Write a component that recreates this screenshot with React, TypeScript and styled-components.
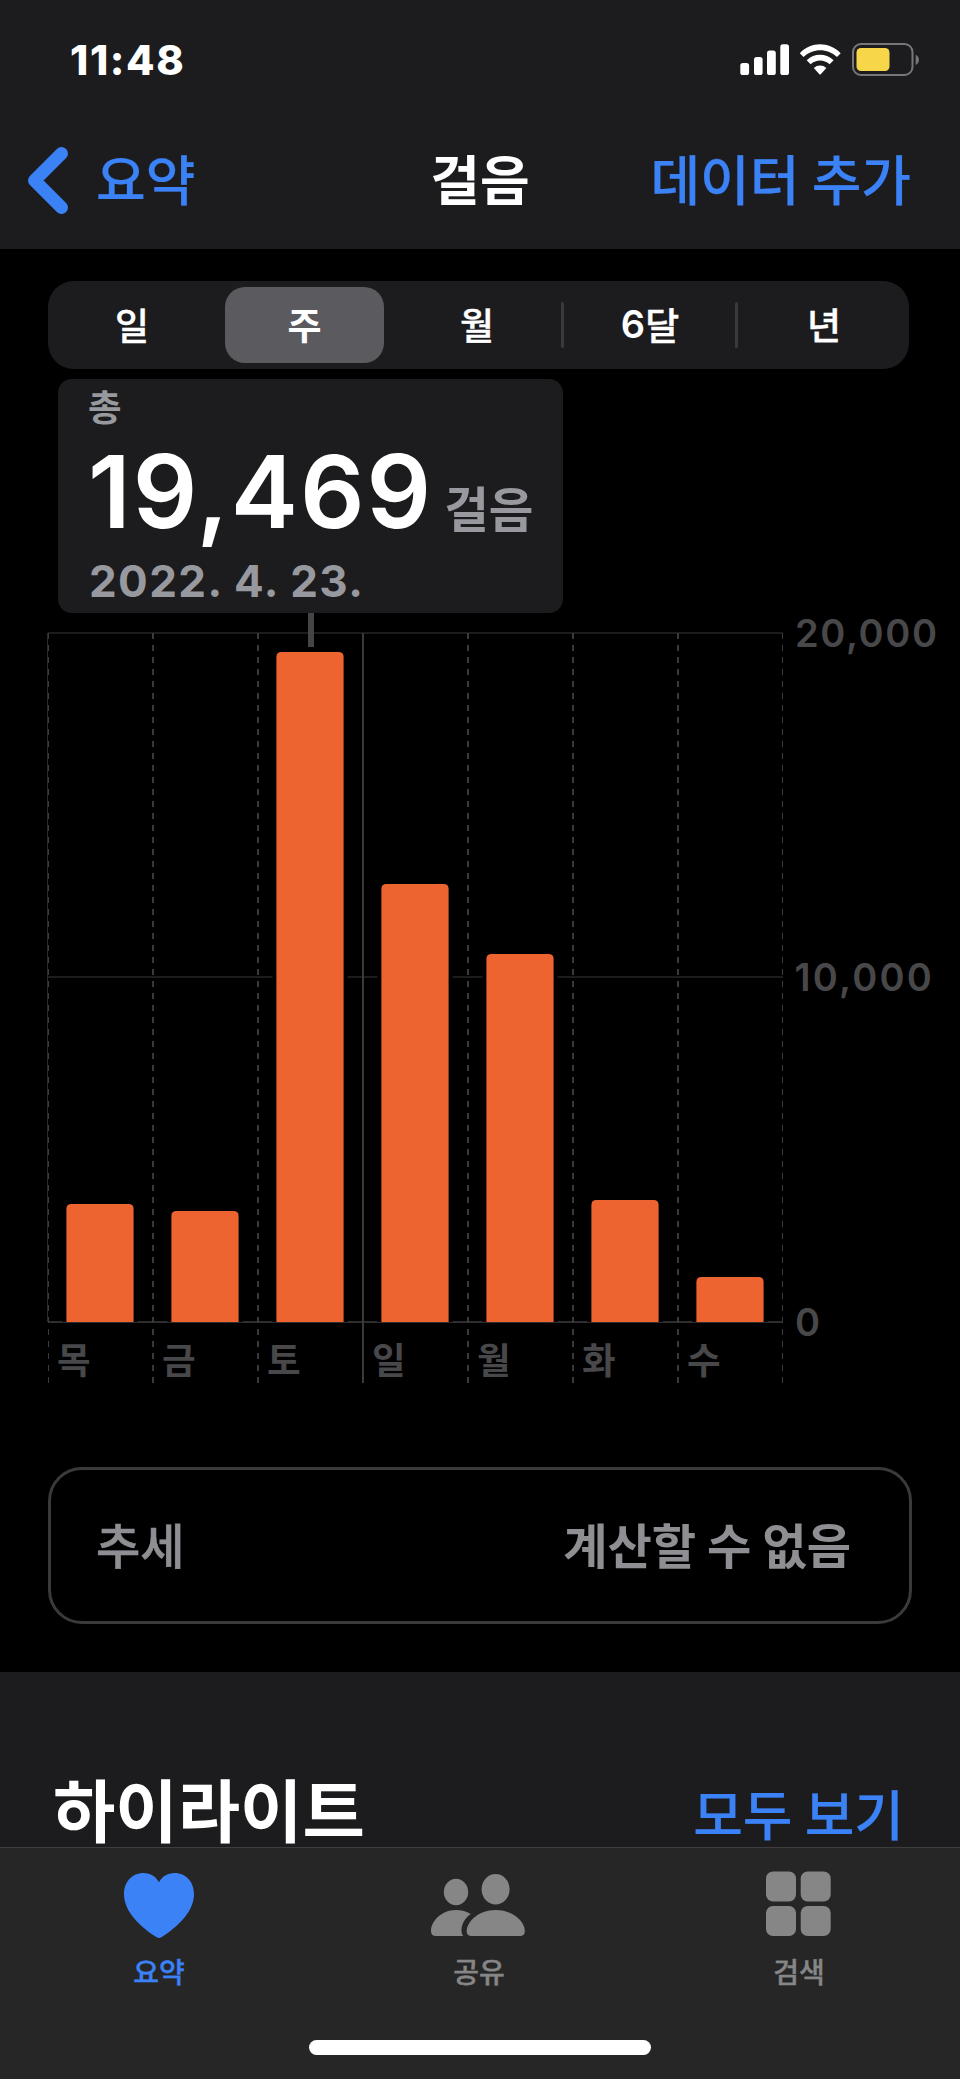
import React from "react";
import styled, { createGlobalStyle } from "styled-components";

const LATIN = `Inter, "Noto Sans CJK KR", sans-serif`;
const KOREAN = `"Noto Sans CJK KR", Inter, sans-serif`;

const color = {
  blue: "#3b82f7",
  orange: "#ed6430",
  panel: "#1c1c1e",
  tabBar: "#262626",
  line: "#3a3a3c",
  faint: "#1c1c1e",
  label: "#98989f",
  gray: "#8e8e93",
  axis: "#48484a",
  tab: "#868686",
};

const GlobalStyle = createGlobalStyle`
  *, *::before, *::after { box-sizing: border-box; }
  body { margin: 0; background: #000; }
  button { border: 0; padding: 0; margin: 0; background: none; font: inherit; color: inherit; }
`;

const Screen = styled.div`
  width: 960px;
  height: 2079px;
  display: flex;
  flex-direction: column;
  overflow: hidden;
  background: #000;
  color: #fff;
  font-family: ${KOREAN};
  white-space: nowrap;
`;

const Header = styled.header`
  height: 249px;
  flex: none;
  background: ${color.panel};
`;

const StatusBar = styled.div`
  height: 120px;
  padding: 0 41px 0 70px;
  display: flex;
  align-items: center;
  justify-content: space-between;
`;

const Clock = styled.span`
  font: 800 41.5px/60px ${LATIN};
  letter-spacing: 1.6px;
`;

const NavBar = styled.nav`
  height: 114px;
  padding: 1px 28px 0;
  display: grid;
  grid-template-columns: 1fr auto 1fr;
  align-items: center;
  font-size: 54px;
  line-height: 80px;
`;

const BackButton = styled.button`
  display: flex;
  align-items: center;
  gap: 28px;
  color: ${color.blue};
  font-weight: 500;
  -webkit-text-stroke: 0.2px currentColor;
`;

const BackChevron = styled.svg`
  margin-top: 6px;
`;

const NavTitle = styled.h1`
  margin: 0;
  font-size: inherit;
  font-weight: 700;
`;

const TextButton = styled.button`
  justify-self: end;
  text-align: right;
  color: ${color.blue};
  font-weight: 500;
  -webkit-text-stroke: 0.2px currentColor;
`;

const AddButton = styled(TextButton)`
  margin-right: 21px;
`;

const Segments = styled.div`
  flex: none;
  width: 861px;
  height: 88px;
  margin: 32px 0 0 48px;
  border-radius: 26px;
  background: ${color.panel};
  display: grid;
  grid-template-columns: 170px 173px 172px 174px 172px;
`;

const Segment = styled.button<{ $active?: boolean; $divided?: boolean }>`
  position: relative;
  display: flex;
  align-items: center;
  justify-content: center;
  margin: ${(p) => (p.$active ? "6px 7px" : "6px 0")};
  padding-bottom: 3px;
  border-radius: 20px;
  background: ${(p) => (p.$active ? "#5b5a5f" : "transparent")};
  font: ${(p) => (p.$active ? 700 : 500)} 37px/50px ${KOREAN};
  -webkit-text-stroke: ${(p) => (p.$active ? "0" : "0.4px")} currentColor;

  &:first-child {
    padding-right: 2px;
  }

  &:last-child {
    padding-left: 2px;
  }

  &::after {
    content: "";
    display: ${(p) => (p.$divided ? "block" : "none")};
    position: absolute;
    right: -1px;
    top: 15px;
    width: 3px;
    height: 46px;
    border-radius: 2px;
    background: ${color.line};
  }
`;

const Six = styled.span`
  font-family: Inter, sans-serif;
  font-weight: 600;
  font-size: 38px;
  -webkit-text-stroke: 0;
`;

const Callout = styled.section`
  flex: none;
  width: 505px;
  height: 234px;
  margin: 10px 0 0 58px;
  padding: 5px 0 0 30px;
  border-radius: 14px;
  background: ${color.panel};
  color: ${color.label};
`;

const CalloutCaption = styled.div`
  font-size: 36.5px;
  font-weight: 700;
  line-height: 44px;
`;

const CalloutValue = styled.div`
  display: flex;
  align-items: baseline;
  height: 125px;
  font-size: 48.5px;
  font-weight: 700;
  line-height: 100px;
`;

const BigNumber = styled.span`
  color: #fff;
  margin-right: 11px;
  font: 600 101px/127px ${LATIN};
  letter-spacing: 2px;
`;

const CalloutDate = styled.div`
  padding-left: 1px;
  font: 700 44px/56px ${LATIN};
  letter-spacing: 1.4px;
`;

const Chart = styled.svg`
  flex: none;
  display: block;
  overflow: visible;
`;

const AxisNumber = styled.text<{ $spacing?: number }>`
  font: 600 38px ${LATIN};
  letter-spacing: ${(p) => p.$spacing ?? 0}px;
  fill: ${color.axis};
`;

const DayLabel = styled.text`
  font: 700 36.5px ${KOREAN};
  fill: ${color.axis};
`;

const TrendCard = styled.section`
  flex: none;
  width: 864px;
  height: 157px;
  margin: 74px 0 0 48px;
  padding: 0 58px 6px 45px;
  border: 3px solid ${color.line};
  border-radius: 34px;
  display: flex;
  align-items: center;
  justify-content: space-between;
  color: ${color.gray};
  font-size: 48.2px;
  line-height: 70px;
`;

const TrendName = styled.span`
  font-weight: 500;
  -webkit-text-stroke: 0.6px currentColor;
`;

const TrendValue = styled.span`
  font-weight: 700;
`;

const Highlights = styled.section`
  flex: none;
  height: 175px;
  margin-top: 48px;
  padding: 86px 56px 0 53px;
  background: ${color.panel};
  display: flex;
  justify-content: space-between;
  align-items: flex-start;
`;

const HighlightsTitle = styled.h2`
  margin: 0;
  font-size: 67.8px;
  font-weight: 700;
  line-height: 100px;
`;

const ShowAll = styled(TextButton)`
  padding-top: 15px;
  font-size: 54px;
  line-height: 80px;
`;

const TabBar = styled.footer`
  flex: none;
  height: 232px;
  background: ${color.tabBar};
  border-top: 1px solid #3d3d3d;
  display: flex;
  flex-direction: column;
  align-items: center;
`;

const Tabs = styled.div`
  width: 960px;
  height: 192px;
  display: grid;
  grid-template-columns: repeat(3, 320px);
`;

const Tab = styled.button<{ $active?: boolean }>`
  display: flex;
  flex-direction: column;
  align-items: center;
  padding: 22px 2px 0 0;
  color: ${(p) => (p.$active ? color.blue : color.tab)};
  font: 500 28px/40px ${KOREAN};
  -webkit-text-stroke: 0.4px currentColor;
`;

const TabIcon = styled.svg`
  display: block;
  margin-bottom: 11px;
  fill: currentColor;
`;

const HomeIndicator = styled.div`
  width: 342px;
  height: 15px;
  border-radius: 8px;
  background: #fff;
`;

const BASELINE = 1322;
const STEP = 105;

const days = [
  { name: "목", top: 1204 },
  { name: "금", top: 1211 },
  { name: "토", top: 652 },
  { name: "일", top: 884 },
  { name: "월", top: 954 },
  { name: "화", top: 1200 },
  { name: "수", top: 1277 },
];

const barPath = (x: number, top: number, w: number, r: number) =>
  `M${x} ${BASELINE}V${top + r}q0 ${-r} ${r} ${-r}h${w - 2 * r}q${r} 0 ${r} ${r}V${BASELINE}Z`;

function StepsChart() {
  return (
    <Chart width="960" height="780" viewBox="0 613 960 780">
      <rect x="48" y="632" width="735" height="2" fill={color.faint} />
      <rect x="48" y="976" width="735" height="2" fill={color.faint} />
      <rect x="48" y="1321" width="735" height="2" fill="#2e2e30" />
      <rect x="47" y="633" width="1" height="689" fill="#2a2a2c" />
      {Array.from({ length: 8 }, (_, i) => {
        const edge = i === 0 || i === 7;
        const x = i === 0 ? 48.5 : i === 7 ? 782.5 : 48 + i * STEP;
        return (
          <line
            key={i}
            x1={x}
            x2={x}
            y1="633"
            y2="1383"
            stroke={color.line}
            strokeWidth={edge ? 1 : 2}
            strokeDasharray={i === 3 ? undefined : "6 6"}
          />
        );
      })}
      {days.map((d, i) => (
        <g key={d.name}>
          <path d={barPath(62.4 + i * STEP, d.top - 4, 75.2, 7)} fill="#000" />
          <path d={barPath(66.4 + i * STEP, d.top, 67.2, 5)} fill={color.orange} />
          <DayLabel x={57 + i * STEP} y="1373.5">
            {d.name}
          </DayLabel>
        </g>
      ))}
      <rect x="308" y="613" width="6" height="34" fill="#454547" />
      <AxisNumber x="795" y="647" $spacing={1.6}>20,000</AxisNumber>
      <AxisNumber x="794.5" y="991" $spacing={2.2}>10,000</AxisNumber>
      <AxisNumber x="795" y="1336">0</AxisNumber>
    </Chart>
  );
}

function StatusIcons() {
  return (
    <svg width="180" height="36" viewBox="739 42 180 36" fill="#fff">
      <rect x="740.3" y="63" width="8.8" height="12" rx="2.6" />
      <rect x="754" y="57" width="8.6" height="18" rx="2.6" />
      <rect x="767" y="50.5" width="8.8" height="24.5" rx="2.6" />
      <rect x="780.3" y="44.3" width="8.7" height="30.7" rx="2.6" />
      <path d="M799.8 53.2C811 41.3 829 41.3 840.7 53.2L837 57C827.5 47.9 813 47.9 803.5 57Z" />
      <path d="M806.7 60.3C814.5 53 825.5 53 833.6 60.3L829.6 64.3C823.7 59.3 816.5 59.3 810.6 64.3Z" />
      <path d="M813.8 68C817.5 64.7 822.7 64.7 826.4 68L821 73.9Q820.1 75 819.2 73.9Z" />
      <rect x="853" y="44" width="59.5" height="31" rx="8" fill="none" stroke="#77777a" strokeWidth="2" />
      <rect x="856.5" y="48" width="33" height="23" rx="4.5" fill="#f7d64a" />
      <path d="M915.7 54.7C920 56.5 920 63.2 915.7 65Z" fill="#77777a" />
    </svg>
  );
}

export default function App() {
  return (
    <>
      <GlobalStyle />
      <Screen>
        <Header>
          <StatusBar>
            <Clock>11:48</Clock>
            <StatusIcons />
          </StatusBar>
          <NavBar>
            <BackButton>
              <BackChevron width="40" height="67" viewBox="0 0 40 67" fill="none" stroke="currentColor" strokeWidth="13" strokeLinecap="round" strokeLinejoin="round">
                <path d="M33.5 6.5L6.5 33.5L33.5 60.5" />
              </BackChevron>
              <span>요약</span>
            </BackButton>
            <NavTitle>걸음</NavTitle>
            <AddButton>데이터 추가</AddButton>
          </NavBar>
        </Header>

        <Segments>
          <Segment>일</Segment>
          <Segment $active>주</Segment>
          <Segment $divided>월</Segment>
          <Segment $divided>
            <Six>6</Six>달
          </Segment>
          <Segment>년</Segment>
        </Segments>

        <Callout>
          <CalloutCaption>총</CalloutCaption>
          <CalloutValue>
            <BigNumber>19,469</BigNumber>걸음
          </CalloutValue>
          <CalloutDate>2022. 4. 23.</CalloutDate>
        </Callout>

        <StepsChart />

        <TrendCard>
          <TrendName>추세</TrendName>
          <TrendValue>계산할 수 없음</TrendValue>
        </TrendCard>

        <Highlights>
          <HighlightsTitle>하이라이트</HighlightsTitle>
          <ShowAll>모두 보기</ShowAll>
        </Highlights>

        <TabBar>
          <Tabs>
            <Tab $active>
              <TabIcon width="96" height="70" viewBox="111 1870 96 70">
                <path d="M159 1938C157.5 1938 156 1937 154 1935.6C137 1924 124 1910 124 1894C124 1882 132 1873 143.5 1873C150.5 1873 156 1876.5 159 1882.3C162 1876.5 167.5 1873 174.5 1873C186 1873 194 1882 194 1894C194 1910 181 1924 164 1935.6C162 1937 160.5 1938 159 1938Z" />
              </TabIcon>
              요약
            </Tab>
            <Tab>
              <TabIcon width="96" height="70" viewBox="431 1870 96 70">
                <ellipse cx="456" cy="1892" rx="12.2" ry="13.2" />
                <ellipse cx="495.6" cy="1889.2" rx="14" ry="15.2" />
                <path d="M436 1936C432.5 1936 431 1934.3 431 1931C431 1921.5 441 1910 456 1910C461.5 1910 466.5 1911.3 470.7 1914C462.5 1919.8 459.3 1929.5 463 1936Z" />
                <path d="M472 1936C468.3 1936 466.7 1934.3 466.7 1931C466.7 1922 478 1910 495.7 1910C513.5 1910 524.8 1922 524.8 1931C524.8 1934.3 523.2 1936 519.5 1936Z" />
              </TabIcon>
              공유
            </Tab>
            <Tab>
              <TabIcon width="96" height="70" viewBox="751 1870 96 70">
                <rect x="766" y="1871.5" width="30" height="30" rx="7" />
                <rect x="800.7" y="1871.5" width="30" height="30" rx="7" />
                <rect x="766" y="1906" width="30" height="30" rx="7" />
                <rect x="800.7" y="1906" width="30" height="30" rx="7" />
              </TabIcon>
              검색
            </Tab>
          </Tabs>
          <HomeIndicator />
        </TabBar>
      </Screen>
    </>
  );
}
